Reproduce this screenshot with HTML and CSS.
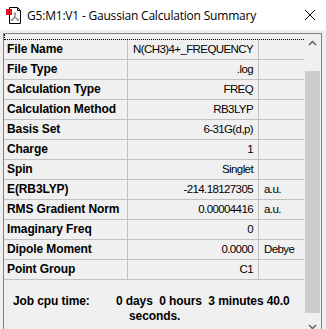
FILE: index.html
```html
<!DOCTYPE html>
<html>
<head>
<meta charset="utf-8">
<link rel="stylesheet" href="styles.css">
</head>
<body>
<div class="titlebar">
  <svg class="appicon" width="18" height="18" viewBox="0 0 18 18">
    <path d="M3.5 1.5 H11.5 L14.5 4.5 V17.5 H3.5 Z" fill="#fff" stroke="#000"/>
    <path d="M11.5 1.5 V4.5 H14.5" fill="none" stroke="#000"/>
    <path d="M9 8 V11 M9 11 L6.5 13.5 M9 11 L11.5 13.5" stroke="#8a8a8a" stroke-width="1.4" fill="none"/>
    <circle cx="9" cy="7.5" r="1.3" fill="#9a9a9a"/>
    <circle cx="6" cy="14" r="1.3" fill="#9a9a9a"/>
    <circle cx="12" cy="14" r="1.3" fill="#9a9a9a"/>
    <rect x="0" y="3" width="6" height="6" fill="#e0161e"/>
  </svg>
  <span class="title">G5:M1:V1 - Gaussian Calculation Summary</span>
  <svg class="close" width="12" height="12" viewBox="0 0 12 12">
    <path d="M1 1 L11 11 M11 1 L1 11" stroke="#000" stroke-width="1"/>
  </svg>
</div>
<div class="frame">
  <div class="grid">
    <div class="fixed"></div>
    <div class="row"><div class="lab">File Name</div><div class="val">N(CH3)4+_FREQUENCY</div><div class="unit"></div></div>
    <div class="row"><div class="lab">File Type</div><div class="val">.log</div><div class="unit"></div></div>
    <div class="row"><div class="lab">Calculation Type</div><div class="val">FREQ</div><div class="unit"></div></div>
    <div class="row"><div class="lab">Calculation Method</div><div class="val">RB3LYP</div><div class="unit"></div></div>
    <div class="row"><div class="lab">Basis Set</div><div class="val">6-31G(d,p)</div><div class="unit"></div></div>
    <div class="row"><div class="lab">Charge</div><div class="val">1</div><div class="unit"></div></div>
    <div class="row"><div class="lab">Spin</div><div class="val">Singlet</div><div class="unit"></div></div>
    <div class="row"><div class="lab">E(RB3LYP)</div><div class="val">-214.18127305</div><div class="unit">a.u.</div></div>
    <div class="row"><div class="lab">RMS Gradient Norm</div><div class="val">0.00004416</div><div class="unit">a.u.</div></div>
    <div class="row"><div class="lab">Imaginary Freq</div><div class="val">0</div><div class="unit"></div></div>
    <div class="row"><div class="lab">Dipole Moment</div><div class="val">0.0000</div><div class="unit">Debye</div></div>
    <div class="row"><div class="lab">Point Group</div><div class="val">C1</div><div class="unit"></div></div>
    <div class="job">
      <div class="joblab">Job cpu time:</div>
      <div class="jobval">
        <div>0 days&nbsp; 0 hours&nbsp; 3 minutes 40.0</div>
        <div class="jobline2">seconds.</div>
      </div>
    </div>
  </div>
  <div class="scroll">
    <div class="sbtn">
      <svg width="9" height="6" viewBox="0 0 9 6"><path d="M1 5 L4.5 1.5 L8 5" stroke="#606060" stroke-width="1.5" fill="none"/></svg>
    </div>
    <div class="thumb"></div>
    <div class="sbtn">
      <svg width="9" height="6" viewBox="0 0 9 6"><path d="M1 1 L4.5 4.5 L8 1" stroke="#606060" stroke-width="1.5" fill="none"/></svg>
    </div>
  </div>
</div>
</body>
</html>
```
FILE: styles.css
```css
html, body {
  margin: 0;
  padding: 0;
  background: #f0f0f0;
  overflow: hidden;
  width: 326px;
  height: 329px;
}
.titlebar {
  height: 30px;
  background: #fff;
  display: flex;
  align-items: center;
}
.appicon {
  margin-left: 6px;
}
.title {
  margin-left: 3px;
  font-family: "Open Sans", "Noto Sans", sans-serif;
  font-size: 12px;
  letter-spacing: -0.2px;
  color: #000;
}
.close {
  margin-left: auto;
  margin-right: 10px;
}
.frame {
  margin: 3px 0 0 3px;
  width: 317px;
  height: 295px;
  overflow: hidden;
  border: 1px solid #828282;
  border-bottom: none;
  display: flex;
}
.grid {
  width: 300px;
  display: flex;
  flex-direction: column;
  font-family: "Liberation Sans", Arial, sans-serif;
  color: #000;
}
.fixed {
  height: 5px;
  flex: none;
  border-left: 1px dotted #000;
  border-bottom: 1px dotted #000;
}
.row {
  display: flex;
  flex: none;
  height: 20px;
  box-sizing: border-box;
  border-bottom: 1px solid #c0c0c0;
}
.lab {
  width: 124px;
  padding-left: 3px;
  box-sizing: border-box;
  border-right: 1px solid #c0c0c0;
  font-weight: bold;
  font-size: 12px;
  letter-spacing: -0.1px;
  line-height: 19px;
  white-space: nowrap;
}
.val {
  width: 131px;
  box-sizing: border-box;
  border-right: 1px solid #c0c0c0;
  text-align: right;
  padding-right: 5px;
  font-size: 11.5px;
  letter-spacing: -0.6px;
  line-height: 19px;
  white-space: nowrap;
}
.unit {
  flex: 1;
  padding-left: 5px;
  font-size: 11.5px;
  letter-spacing: -0.6px;
  line-height: 19px;
  white-space: nowrap;
}
.job {
  display: flex;
  flex: none;
  padding-top: 14px;
  font-weight: bold;
  font-size: 12px;
  line-height: 15px;
  letter-spacing: -0.1px;
}
.joblab {
  width: 103px;
  padding-left: 9px;
}
.jobline2 {
  padding-left: 13px;
}
.scroll {
  width: 17px;
  display: flex;
  flex-direction: column;
  background: #f0f0f0;
}
.sbtn {
  height: 17px;
  display: flex;
  align-items: center;
  justify-content: center;
  flex: none;
}
.thumb {
  margin: 20px 0 5px 1px;
  width: 15px;
  height: 242px;
  background: #cdcdcd;
  flex: none;
}
```
